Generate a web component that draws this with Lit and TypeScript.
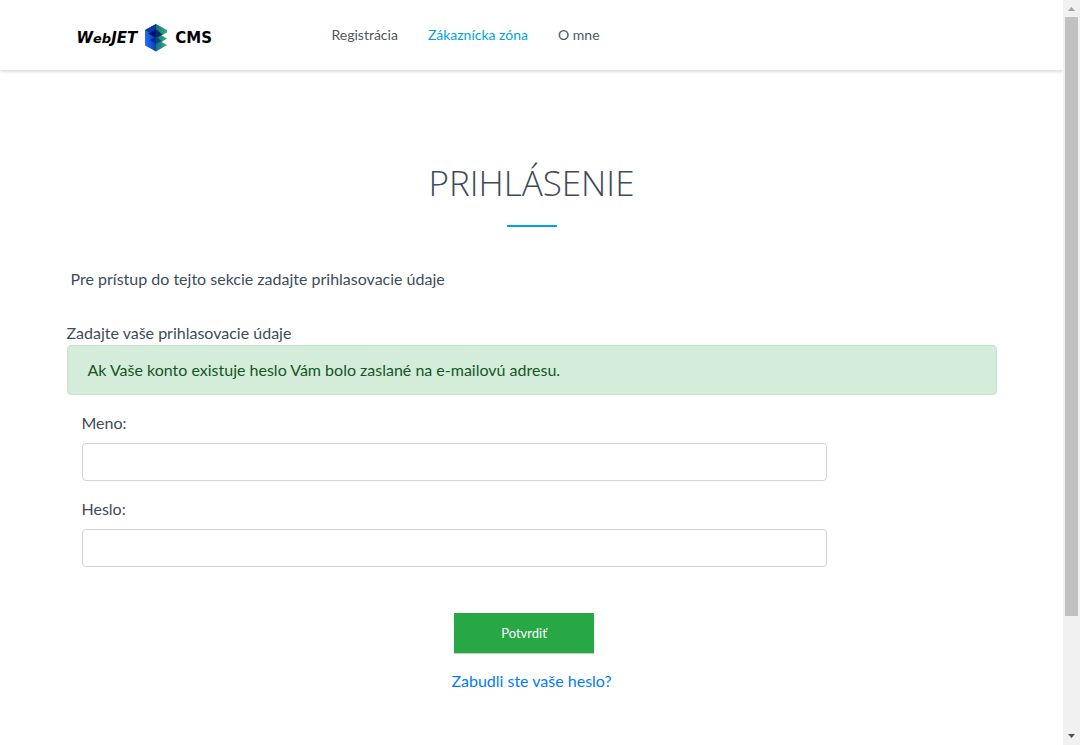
import { LitElement, html, css } from "lit";
import { customElement, state } from "lit/decorators.js";
import { classMap } from "lit/directives/class-map.js";

interface NavItem {
  label: string;
  active?: boolean;
}

@customElement("site-logo")
class SiteLogo extends LitElement {
  static styles = css`
    :host {
      display: block;
    }
    .logo {
      display: flex;
      align-items: center;
      gap: 7px;
      color: #000;
      text-decoration: none;
      font: bold 15px/28px "DejaVu Sans", sans-serif;
    }
    .name {
      font-style: italic;
    }
    .small {
      font-size: 13px;
    }
    .mark {
      display: block;
      width: 24px;
      height: 28px;
    }
  `;

  render() {
    return html`
      <a class="logo" href="#">
        <span class="name">W<span class="small">eb</span>JET</span>
        <svg class="mark" viewBox="0 0 24 28" aria-hidden="true">
          <defs>
            <linearGradient id="left" x1="0" x2="1">
              <stop offset="0" stop-color="#2470ff" />
              <stop offset="1" stop-color="#0a3cae" />
            </linearGradient>
            <linearGradient id="right" x1="0" x2="1">
              <stop offset="0" stop-color="#127080" />
              <stop offset="1" stop-color="#38b07e" />
            </linearGradient>
          </defs>
          <path d="M12 0 1 6v15.500l11 6z" fill="url(#left)" />
          <path
            d="M12 0l11 6v2.500l-5.500 3L23 14.500l-5.500 3.500 5.500 3-11 6.500z"
            fill="url(#right)"
          />
          <path d="M12 0 1 6l11 6z" fill="#0838a0" />
          <path d="M12 5.500 4 9.500l8 4.500 6-3.500z" fill="#021370" />
          <path d="M12 5.500V14l6-3.500z" fill="#02306a" />
          <path d="M12 12.500 6 16l6 4z" fill="#052c92" />
          <path d="M12 12.500V20l5.500-3z" fill="#0a4a70" />
        </svg>
        <span>CMS</span>
      </a>
    `;
  }
}

@customElement("page-scrollbar")
class PageScrollbar extends LitElement {
  static styles = css`
    :host {
      display: flex;
      flex-direction: column;
      background: #f1f1f1;
    }
    .arrow {
      display: block;
      width: 17px;
      height: 17px;
    }
    .track {
      flex: 1;
      padding: 0 2px;
    }
    .thumb {
      height: 84.2%;
      background: #c1c1c1;
    }
  `;

  render() {
    return html`
      <svg class="arrow" viewBox="0 0 17 17" aria-hidden="true">
        <path d="M5 11h7L8.500 7z" fill="#a3a3a3" />
      </svg>
      <div class="track"><div class="thumb"></div></div>
      <svg class="arrow" viewBox="0 0 17 17" aria-hidden="true">
        <path d="M5 6h7l-3.500 4z" fill="#505050" />
      </svg>
    `;
  }
}

@customElement("app-root")
class AppRoot extends LitElement {
  static styles = css`
    :host {
      display: flex;
      height: 100vh;
      overflow: hidden;
      background: #fff;
      color: #3e4c59;
      font: 16px/24px Lato, sans-serif;
    }
    * {
      box-sizing: border-box;
    }
    .page {
      flex: 1;
      min-width: 0;
      overflow: hidden;
    }
    .header {
      box-shadow: 0 1px 4px rgba(0, 0, 0, 0.2);
    }
    .container {
      max-width: 960px;
      margin: 0 auto;
      padding: 0 15px;
    }
    .bar {
      display: flex;
      align-items: center;
      height: 70px;
    }
    .brand {
      flex: 0 0 265px;
      padding: 6px 0 0 10px;
    }
    .nav {
      display: flex;
      gap: 30px;
      font-size: 14px;
    }
    .link {
      color: #4a5762;
      text-decoration: none;
    }
    .link.active {
      color: #00a3df;
    }
    .title {
      margin: 0;
      padding-top: 88px;
      font-family: "Open Sans", sans-serif;
      font-size: 35px;
      line-height: 50px;
      font-weight: 300;
      text-align: center;
      text-transform: uppercase;
    }
    .rule {
      width: 50px;
      height: 2px;
      margin: 17px auto 0;
      background: #00a3df;
    }
    .intro {
      margin: 40px 0 30px;
      padding-left: 4px;
    }
    .lead {
      margin: 0;
    }
    .alert {
      padding: 12px 20px;
      border: 1px solid #c3e6cb;
      border-radius: 4px;
      background: #d4edda;
      color: #155724;
    }
    .field {
      display: flex;
      flex-direction: column;
      gap: 8px;
      width: calc(100% * 10 / 12);
      margin-top: 16px;
      padding: 0 15px;
    }
    .input {
      width: 100%;
      height: 38px;
      padding: 6px 12px;
      border: 1px solid #ced4da;
      border-radius: 4px;
      background: #fff;
      color: #495057;
      font: inherit;
    }
    .actions {
      display: flex;
      flex-direction: column;
      align-items: center;
      gap: 16px;
      margin-top: 46px;
    }
    .submit {
      width: 140px;
      height: 40px;
      margin-right: 15px;
      border: 0;
      background: #28a745;
      box-shadow: 0 1px 1px rgba(0, 0, 0, 0.2);
      color: #fff;
      font: 13px/20px Lato, sans-serif;
    }
    .forgot {
      color: #007bff;
      text-decoration: none;
    }
  `;

  @state() private items: NavItem[] = [
    { label: "Registrácia" },
    { label: "Zákaznícka zóna", active: true },
    { label: "O mne" },
  ];

  render() {
    return html`
      <div class="page">
        <header class="header">
          <div class="container bar">
            <site-logo class="brand"></site-logo>
            <nav class="nav">
              ${this.items.map(
                (item) => html`<a
                  class=${classMap({ link: true, active: !!item.active })}
                  href="#"
                  >${item.label}</a
                >`
              )}
            </nav>
          </div>
        </header>
        <main class="container">
          <h1 class="title">Prihlásenie</h1>
          <div class="rule"></div>
          <p class="intro">Pre prístup do tejto sekcie zadajte prihlasovacie údaje</p>
          <p class="lead">Zadajte vaše prihlasovacie údaje</p>
          <div class="alert" role="alert">
            Ak Vaše konto existuje heslo Vám bolo zaslané na e-mailovú adresu.
          </div>
          <form @submit=${(e: Event) => e.preventDefault()}>
            <div class="field">
              <label for="login">Meno:</label>
              <input class="input" id="login" type="text" />
            </div>
            <div class="field">
              <label for="password">Heslo:</label>
              <input class="input" id="password" type="password" />
            </div>
            <div class="actions">
              <button class="submit" type="submit">Potvrdiť</button>
              <a class="forgot" href="#">Zabudli ste vaše heslo?</a>
            </div>
          </form>
        </main>
      </div>
      <page-scrollbar></page-scrollbar>
    `;
  }
}
